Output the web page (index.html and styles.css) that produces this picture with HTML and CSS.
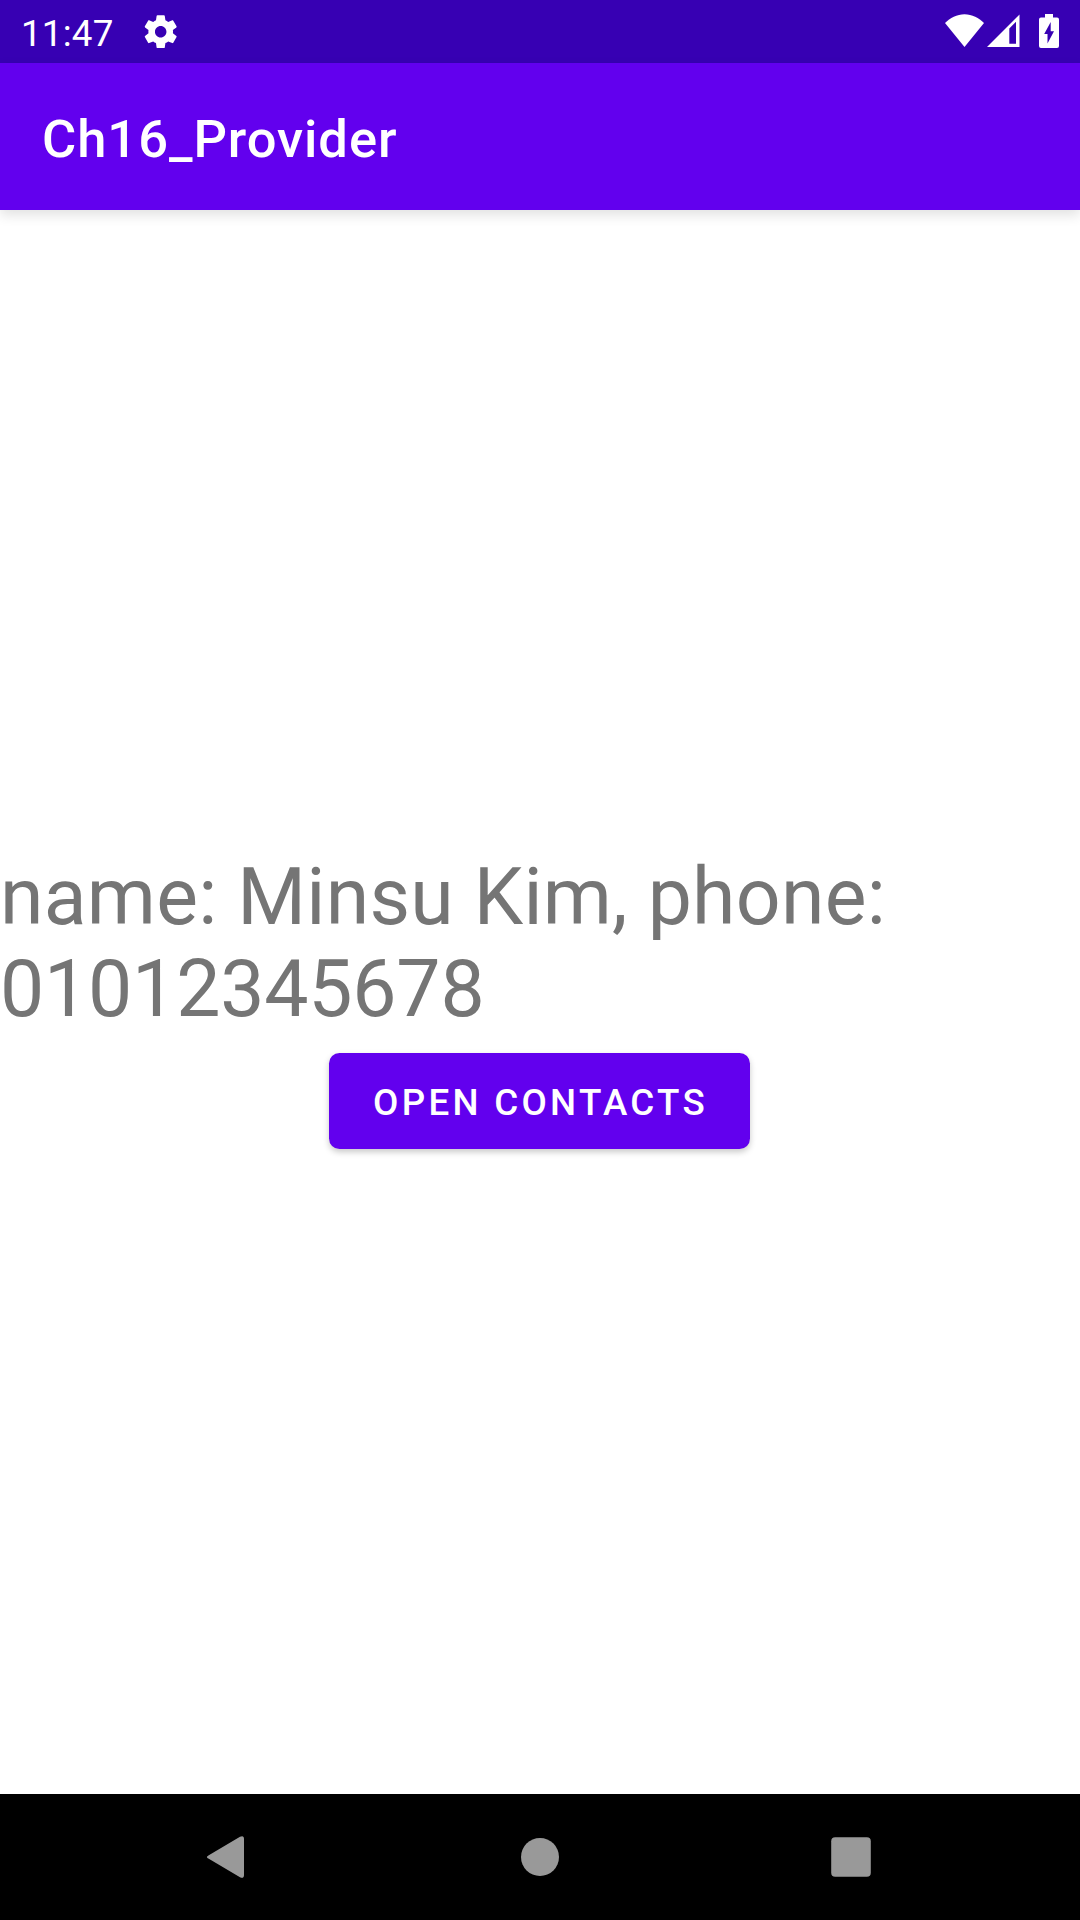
FILE: index.html
```html
<!DOCTYPE html>
<html lang="en">
<head>
    <meta charset="UTF-8">
    <meta name="viewport" content="width=device-width, initial-scale=1.0">
    <title>Ch16_Provider</title>
    <link rel="stylesheet" href="styles.css">
</head>
<body>
    <header class="statusBar">
        <span class="clock">11:47</span>
        <svg class="settingsIcon" viewBox="0 0 24 24">
            <path d="M19.43 12.98c.04-.32.07-.64.07-.98s-.03-.66-.07-.98l2.11-1.65c.19-.15.24-.42.12-.64l-2-3.46c-.12-.22-.39-.3-.61-.22l-2.49 1c-.52-.4-1.08-.73-1.69-.98l-.38-2.65C14.46 2.18 14.25 2 14 2h-4c-.25 0-.46.18-.49.42l-.38 2.65c-.61.25-1.17.59-1.69.98l-2.49-1c-.23-.09-.49 0-.61.22l-2 3.46c-.13.22-.07.49.12.64l2.11 1.65c-.04.32-.07.65-.07.98s.03.66.07.98l-2.11 1.65c-.19.15-.24.42-.12.64l2 3.46c.12.22.39.3.61.22l2.49-1c.52.4 1.08.73 1.69.98l.38 2.65c.03.24.24.42.49.42h4c.25 0 .46-.18.49-.42l.38-2.65c.61-.25 1.17-.59 1.69-.98l2.49 1c.23.09.49 0 .61-.22l2-3.46c.12-.22.07-.49-.12-.64l-2.11-1.65zM12 15.5c-1.93 0-3.5-1.57-3.5-3.5s1.57-3.5 3.5-3.5 3.5 1.57 3.5 3.5-1.57 3.5-3.5 3.5z"/>
        </svg>
        <div class="systemIcons">
            <svg class="wifiIcon" viewBox="0 0 39 33">
                <path d="M19.5 33 0 9C5 4 12 .3 19.5 .3S34 4 39 9z"/>
            </svg>
            <svg class="signalIcon" viewBox="0 0 33 33">
                <path fill-rule="evenodd" d="M0 33 32.5 .5V33zM22.3 14.5V29.8H29V7.8z"/>
            </svg>
            <svg class="batteryIcon" viewBox="0 0 20 34">
                <path fill-rule="evenodd" d="M6 0h8v3.5h4a2 2 0 0 1 2 2V32a2 2 0 0 1-2 2H2a2 2 0 0 1-2-2V5.5a2 2 0 0 1 2-2h4zM11.7 8 5.2 20H8.5v9.5L15 17.2H11.7z"/>
            </svg>
        </div>
    </header>

    <div class="appBar">
        <h1>Ch16_Provider</h1>
    </div>

    <main>
        <p class="result">name: Minsu Kim, phone: <span class="phone">01012345678</span></p>
        <button type="button">OPEN CONTACTS</button>
    </main>

    <nav>
        <svg viewBox="0 0 42 42">
            <path d="M3.8 19.2 35 .7Q39 -1 39 3V39Q39 43 35 41.3L3.8 22.8Q0 21 3.8 19.2z"/>
        </svg>
        <svg viewBox="0 0 42 42">
            <circle cx="22" cy="21" r="19"/>
        </svg>
        <svg viewBox="0 0 42 42">
            <rect x="1.2" y="1.2" width="39.6" height="39.6" rx="4"/>
        </svg>
    </nav>
</body>
</html>
```
FILE: styles.css
```css
* {
    margin: 0;
    padding: 0;
    box-sizing: border-box;
    font-family: Roboto, Arial, sans-serif;
}

body {
    display: flex;
    flex-direction: column;
    height: 100vh;
    width: 100%;
    background: white;
}

svg {
    display: block;
    flex: none;
}

.statusBar {
    display: flex;
    align-items: center;
    height: 63px;
    padding: 0 21px;
    background: #3700b3;
    color: white;
}

.statusBar svg {
    fill: white;
}

.clock {
    width: 92px;
    padding-top: 3px;
    font-size: 36.75px;
    letter-spacing: 0.2px;
}

.settingsIcon {
    width: 39.4px;
    height: 39.4px;
    margin-left: 28px;
}

.systemIcons {
    display: flex;
    margin: 0 0 1px auto;
}

.wifiIcon {
    width: 39px;
    height: 33px;
}

.signalIcon {
    width: 33px;
    height: 33px;
    margin: 0 19px 0 3px;
}

.batteryIcon {
    width: 20px;
    height: 34px;
}

.appBar {
    display: flex;
    align-items: center;
    height: 147px;
    padding: 4px 42px 0;
    background: #6200ee;
    color: white;
    box-shadow: 0 5px 12px #0000001f;
}

h1 {
    font-size: 52.5px;
    font-weight: 500;
    letter-spacing: 0.95px;
}

main {
    flex: 1;
    display: flex;
    flex-direction: column;
    align-items: center;
    justify-content: center;
}

.result {
    width: 100%;
    padding: 12px 0 2px;
    font-size: 78.75px;
    line-height: 92px;
    letter-spacing: 0.25px;
    color: #757575;
}

.phone {
    letter-spacing: -0.22px;
}

button {
    width: 421px;
    height: 96px;
    margin: 16px 1px 16px 0;
    padding: 2px 0 0 2px;
    border: none;
    border-radius: 10.5px;
    background: #6200ee;
    color: white;
    font-size: 36.75px;
    font-weight: 500;
    letter-spacing: 3.28px;
    box-shadow: 0 3px 6px #00000038;
}

nav {
    display: flex;
    align-items: center;
    justify-content: space-between;
    height: 126px;
    padding: 0 208px 0 205px;
    background: black;
}

nav svg {
    width: 42px;
    height: 42px;
    fill: #999999;
}
```
